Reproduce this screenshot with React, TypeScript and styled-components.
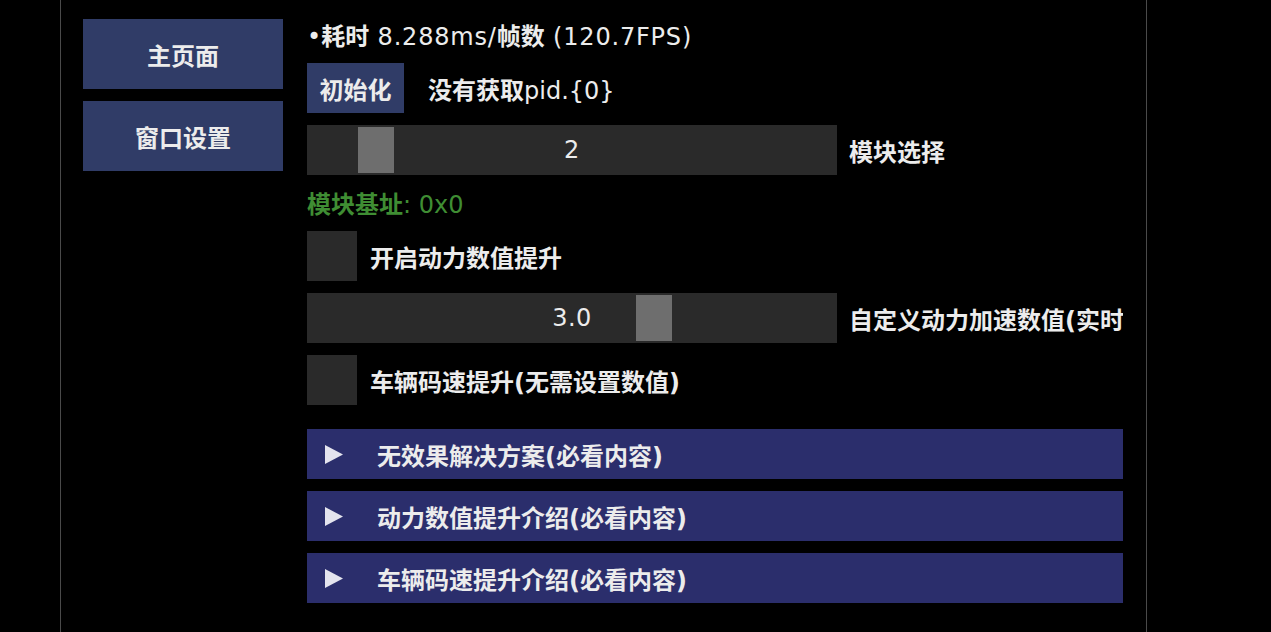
import React from 'react';
import styled, { createGlobalStyle } from 'styled-components';

const GlobalStyle = createGlobalStyle`
  html, body {
    margin: 0;
    padding: 0;
    background: #000;
    height: 100%;
  }
  body {
    font-family: 'DejaVu Sans', 'Noto Sans CJK SC', sans-serif;
    font-weight: 700;
    color: #ececec;
    overflow: hidden;
  }
`;

const Screen = styled.div`
  width: 1271px;
  height: 632px;
  background: #000;
  display: flex;
  padding-left: 60px;
  box-sizing: border-box;
`;

const Window = styled.div`
  width: 1087px;
  height: 100%;
  box-sizing: border-box;
  border-left: 1px solid #4a4a4a;
  border-right: 1px solid #4a4a4a;
  display: flex;
  gap: 24px;
  padding: 19px 0 0 22px;
`;

const Nav = styled.nav`
  display: flex;
  flex-direction: column;
  gap: 12px;
  width: 200px;
  flex-shrink: 0;
`;

const NavButton = styled.button`
  height: 70px;
  border: none;
  background: #303c67;
  color: #ececec;
  font-family: inherit;
  font-size: 24px;
  font-weight: 700;
  padding: 0;
  cursor: pointer;
`;

const Content = styled.div`
  width: 816px;
  overflow: hidden;
  display: flex;
  flex-direction: column;
  gap: 12px;
`;

const TextLine = styled.div<{ $color?: string }>`
  height: 32px;
  line-height: 36px;
  font-size: 24px;
  white-space: nowrap;
  color: ${({ $color }) => $color || '#ececec'};
`;

// latin runs in the reference font are lighter than the CJK glyphs
const Latin = styled.span<{ $spacing?: number }>`
  font-weight: 400;
  letter-spacing: ${({ $spacing }) => $spacing || 0}px;
`;

const Row = styled.div`
  display: flex;
  align-items: center;
  height: 50px;
  white-space: nowrap;
`;

const SmallButton = styled.button`
  height: 50px;
  width: 97px;
  border: none;
  background: #303c67;
  color: #ececec;
  font-family: inherit;
  font-size: 24px;
  font-weight: 700;
  padding: 0;
  margin-right: 24px;
`;

const Label = styled.span<{ $gap?: number }>`
  margin-left: ${({ $gap }) => $gap || 0}px;
  font-size: 24px;
  white-space: nowrap;
`;

const Track = styled.div`
  position: relative;
  width: 530px;
  height: 50px;
  flex-shrink: 0;
  background: #2a2a2a;
  display: flex;
  align-items: center;
  justify-content: center;
`;

const Thumb = styled.div`
  position: absolute;
  top: 2px;
  width: 36px;
  height: 46px;
  background: #6e6e6e;
`;

const TrackValue = styled.span`
  position: relative;
  font-size: 24px;
  font-weight: 400;
  letter-spacing: 0.5px;
`;

const Box = styled.div`
  width: 50px;
  height: 50px;
  flex-shrink: 0;
  background: #2a2a2a;
`;

const Headers = styled.div`
  display: flex;
  flex-direction: column;
  gap: 12px;
  margin-top: 12px;
`;

const Header = styled.div`
  display: flex;
  align-items: center;
  height: 50px;
  background: #2b2e6c;
  padding-left: 18px;
  font-size: 24px;
  white-space: nowrap;
`;

const Arrow = styled.svg`
  width: 18px;
  height: 19px;
  margin-right: 34px;
  flex-shrink: 0;
`;

type SliderProps = { value: string; min: number; max: number; num: number; label: string };

const Slider: React.FC<SliderProps> = ({ value, min, max, num, label }) => {
  const frac = (num - min) / (max - min);
  const left = 2 + frac * (530 - 4 - 36);
  return (
    <Row>
      <Track>
        <Thumb style={{ left }} />
        <TrackValue>{value}</TrackValue>
      </Track>
      <Label $gap={12}>{label}</Label>
    </Row>
  );
};

const Checkbox: React.FC<{ label: string }> = ({ label }) => (
  <Row>
    <Box />
    <Label $gap={13}>{label}</Label>
  </Row>
);

const headers = ['无效果解决方案(必看内容)', '动力数值提升介绍(必看内容)', '车辆码速提升介绍(必看内容)'];

const App: React.FC = () => (
  <>
    <GlobalStyle />
    <Screen>
      <Window>
        <Nav>
          <NavButton>主页面</NavButton>
          <NavButton>窗口设置</NavButton>
        </Nav>
        <Content>
          <TextLine>
            <Latin>•</Latin>耗时<Latin $spacing={0.8}> 8.288ms/</Latin>帧数
            <Latin $spacing={0.8}> (120.7FPS)</Latin>
          </TextLine>
          <Row>
            <SmallButton>初始化</SmallButton>
            <Label>
              没有获取<Latin>pid.{'{0}'}</Latin>
            </Label>
          </Row>
          <Slider value="2" num={2} min={1} max={11} label="模块选择" />
          <TextLine $color="#3f8d33">
            模块基址<Latin>: 0x0</Latin>
          </TextLine>
          <Checkbox label="开启动力数值提升" />
          <Slider value="3.0" num={3} min={1} max={4} label="自定义动力加速数值(实时" />
          <Checkbox label="车辆码速提升(无需设置数值)" />
          <Headers>
            {headers.map((h) => (
              <Header key={h}>
                <Arrow viewBox="0 0 18 19">
                  <polygon points="0,0 18,9.5 0,19" fill="#e4e4ee" />
                </Arrow>
                {h}
              </Header>
            ))}
          </Headers>
        </Content>
      </Window>
    </Screen>
  </>
);

export default App;
